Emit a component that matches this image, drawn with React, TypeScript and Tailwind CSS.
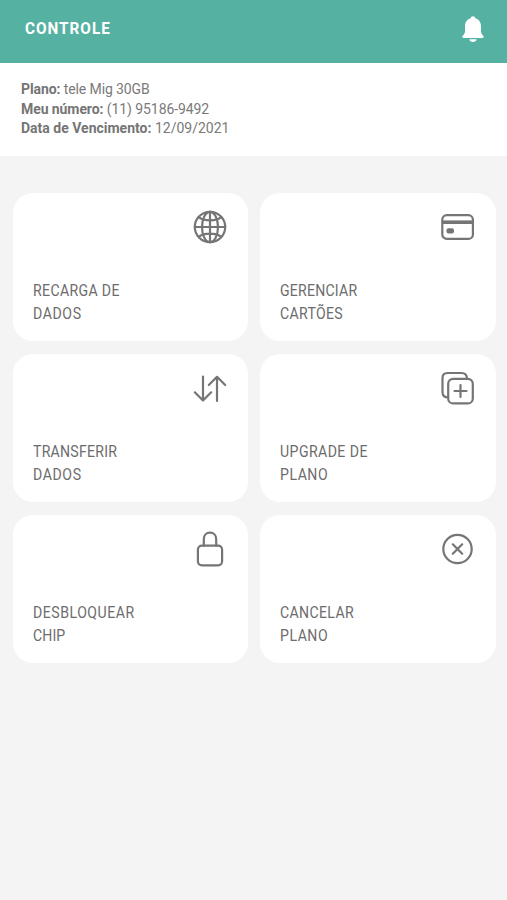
import React from "react";

interface CardProps {
  icon: React.ReactNode;
  lines: { text: string; tracking: string }[];
}

const GlobeIcon = () => (
  <>
    <circle cx="20" cy="20" r="15.2" />
    <ellipse cx="20" cy="20" rx="8" ry="15.2" />
    <path d="M20 4.8v30.4M4.8 20h30.4M8.5 10.2c3 2.3 7 3.2 11.5 3.2s8.5-.9 11.5-3.2M8.5 29.8c3-2.3 7-3.2 11.5-3.2s8.5.9 11.5 3.2" />
  </>
);

const CreditCardIcon = () => (
  <>
    <rect x="4.3" y="8.2" width="30.6" height="23.7" rx="4.5" />
    <path d="M4.3 15.2h30.6" strokeWidth="3.6" strokeLinecap="butt" />
    <rect x="8.5" y="21.2" width="7.5" height="5.3" rx="2" fill="currentColor" stroke="none" />
  </>
);

const TransferIcon = () => (
  <path d="M13 8.5v24M4.8 24.3l8.2 8.2 8.2-8.2M27 33V8.8M18.8 17L27 8.8l8.2 8.2" />
);

const UpgradeIcon = () => (
  <>
    <rect x="10.2" y="10.8" width="24.6" height="24.6" rx="5" />
    <path d="M10.2 29.5c-3.6 0-5.7-2-5.7-5.5V10c0-3.2 1.8-5 5-5h14c3.4 0 5.5 2 5.5 5.8M22.5 17v12M16.5 23h12" />
  </>
);

const LockIcon = () => (
  <>
    <rect x="7.9" y="16.7" width="24.2" height="19.6" rx="4" />
    <path d="M13.8 16.7v-6.5c0-4 2.5-6.5 6.2-6.5s6.2 2.5 6.2 6.5v6.5" />
  </>
);

const CancelIcon = () => (
  <>
    <circle cx="19.5" cy="20" r="14.2" />
    <path d="M14.8 15.3l9.4 9.4M24.2 15.3l-9.4 9.4" />
  </>
);

const cards: CardProps[] = [
  {
    icon: <GlobeIcon />,
    lines: [
      { text: "RECARGA DE", tracking: "tracking-[0.4px]" },
      { text: "DADOS", tracking: "tracking-[0.7px]" },
    ],
  },
  {
    icon: <CreditCardIcon />,
    lines: [
      { text: "GERENCIAR", tracking: "tracking-[0.25px]" },
      { text: "CARTÕES", tracking: "tracking-[0.35px]" },
    ],
  },
  {
    icon: <TransferIcon />,
    lines: [
      { text: "TRANSFERIR", tracking: "tracking-[0.3px]" },
      { text: "DADOS", tracking: "tracking-[0.7px]" },
    ],
  },
  {
    icon: <UpgradeIcon />,
    lines: [
      { text: "UPGRADE DE", tracking: "tracking-[0.5px]" },
      { text: "PLANO", tracking: "tracking-[0.6px]" },
    ],
  },
  {
    icon: <LockIcon />,
    lines: [
      { text: "DESBLOQUEAR", tracking: "tracking-[0.6px]" },
      { text: "CHIP", tracking: "tracking-[0.1px]" },
    ],
  },
  {
    icon: <CancelIcon />,
    lines: [
      { text: "CANCELAR", tracking: "tracking-[0.4px]" },
      { text: "PLANO", tracking: "tracking-[0.6px]" },
    ],
  },
];

const Card = ({ icon, lines }: CardProps) => {
  return (
    <button className="flex h-[148px] flex-col justify-between rounded-[20px] bg-white pt-3.5 pr-[18px] pb-4 pl-5 text-left">
      <svg
        viewBox="0 0 40 40"
        className="h-10 w-10 self-end text-[#757575]"
        fill="none"
        stroke="currentColor"
        strokeWidth="2.2"
        strokeLinecap="round"
        strokeLinejoin="round"
      >
        {icon}
      </svg>
      <span className="origin-left scale-x-[0.88] text-[16px] leading-[23px] text-[#6c6c6c]">
        {lines.map((line) => (
          <span key={line.text} className={`block whitespace-nowrap ${line.tracking}`}>
            {line.text}
          </span>
        ))}
      </span>
    </button>
  );
};

const App = () => {
  return (
    <main className="min-h-screen bg-[#f4f4f4] font-['Roboto',sans-serif]">
      <header className="flex h-[63px] items-center justify-between bg-[#55b1a1] pr-[21px] pb-[6px] pl-[25px]">
        <h1 className="origin-left scale-x-90 text-[17px] font-bold tracking-[1.1px] text-white">
          CONTROLE
        </h1>
        <svg viewBox="0 0 26 30" className="h-[30px] w-[26px] text-white" fill="currentColor">
          <path d="M13 2.3c-1.3 0-2.2.8-2.3 2-3.7 1-5.7 4-5.7 8v5.2c0 1.5-.7 2.7-2 4-1.3 1.3-.8 2.5 1 2.5h18c1.8 0 2.3-1.2 1-2.5-1.3-1.3-2-2.5-2-4v-5.2c0-4-2-7-5.7-8-.1-1.2-1-2-2.3-2z" />
          <path d="M9.3 25.2h7.4c-.3 1.8-1.8 2.8-3.7 2.8s-3.4-1-3.7-2.8z" />
        </svg>
      </header>

      <section className="h-[93px] bg-white pt-[17px] pl-[21px] text-[14px] leading-[19.5px] text-[#7a7a7a]">
        <p className="tracking-[-0.1px]">
          <b className="font-bold text-[#757575]">Plano:</b> tele Mig 30GB
        </p>
        <p className="tracking-[-0.08px]">
          <b className="font-bold text-[#757575]">Meu número:</b> (11) 95186-9492
        </p>
        <p>
          <b className="font-bold text-[#757575]">Data de Vencimento:</b> 12/09/2021
        </p>
      </section>

      <section className="grid grid-cols-[235px_1fr] gap-x-3 gap-y-[13px] pt-[37px] pr-[11px] pl-[13px]">
        {cards.map((card) => (
          <Card key={card.lines[0].text} {...card} />
        ))}
      </section>
    </main>
  );
};

export default App;
